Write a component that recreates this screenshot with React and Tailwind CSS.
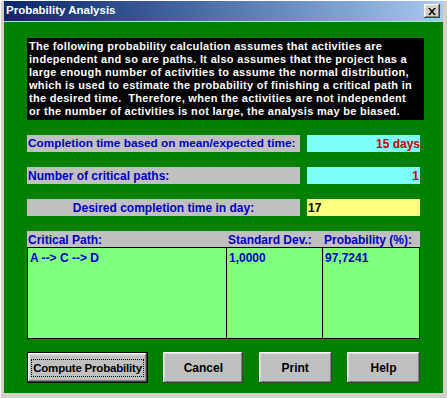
const bevel =
  "shadow-[inset_-1px_-1px_#404040,inset_1px_1px_#ffffff,inset_-2px_-2px_#808080,inset_2px_2px_#dfdfdf]";

const Button = ({ label, width, isDefault }) => (
  <button
    type="button"
    className={`h-[31px] ${width} bg-[#c0c0c0] text-black text-[12px] font-bold whitespace-nowrap ${
      isDefault ? "border border-black" : ""
    } ${bevel} flex items-center justify-center`}
  >
    {isDefault ? (
      <span className="border border-dotted border-black px-[1px] leading-[16px] text-[11.5px] tracking-[-0.2px]">{label}</span>
    ) : (
      label
    )}
  </button>
);

const lines = [
  "The following probability calculation assumes that activities are",
  "independent and so are paths. It also assumes that the project has a",
  "large enough number of activities to assume the normal distribution,",
  "which is used to estimate the probability of finishing a critical path in",
  "the desired time.  Therefore, when the activities are not independent",
  "or the number of activities is not large, the analysis may be biased.",
];

export default function App() {
  return (
    <div
      className="w-[447px] h-[398px] bg-[#d4d0c8] border-l border-t border-white flex flex-col pl-[3px] pr-[4px] pb-[5px] overflow-hidden"
      style={{ fontFamily: '"Liberation Sans", Arial, sans-serif' }}
    >
      {/* title bar */}
      <div className="h-[20px] bg-gradient-to-r from-[#0a246a] to-[#a6caf0] flex items-center justify-between pl-[2px] pr-[3px]">
        <span className="text-white text-[11.5px] font-bold">Probability Analysis</span>
        <div className={`w-[16px] h-[14px] bg-[#d4d0c8] ${bevel} flex items-center justify-center`}>
          <svg width="8" height="7" viewBox="0 0 8 7">
            <path d="M0 0h2l2 2.5L6 0h2L5 3.5 8 7H6L4 4.5 2 7H0l3-3.5z" fill="black" />
          </svg>
        </div>
      </div>

      {/* body */}
      <div className="flex-1 mt-[1px] bg-[#008000] pl-[23px] pr-[19px] pt-[16px] flex flex-col">
        <div className="h-[82px] bg-black px-[2px] pt-[2px] text-white text-[11px] font-bold leading-[13px] whitespace-pre tracking-[0.3px]">
          {lines.map((l) => (
            <div key={l}>{l}</div>
          ))}
        </div>

        <div className="w-[393px] mt-[15px] flex flex-col gap-[15px] text-[12px] font-bold whitespace-nowrap">
          <div className="h-[17px] flex justify-between">
            <div className="w-[273px] bg-[#c0c0c0] text-[#0000c0] pl-[1px] flex items-center text-[11.8px]">
              Completion time based on mean/expected time:
            </div>
            <div className="w-[113px] bg-[#80ffff] text-[#c00000] flex items-center justify-end">
              15 days
            </div>
          </div>
          <div className="h-[17px] flex justify-between">
            <div className="w-[273px] bg-[#c0c0c0] text-[#0000c0] pl-[1px] flex items-center">
              Number of critical paths:
            </div>
            <div className="w-[113px] bg-[#80ffff] text-[#c00000] flex items-center justify-end pr-[1px]">
              1
            </div>
          </div>
          <div className="h-[17px] flex justify-between">
            <div className="w-[273px] bg-[#c0c0c0] text-[#0000c0] flex items-center justify-center">
              Desired completion time in day:
            </div>
            <div className="w-[113px] bg-[#ffff80] text-black flex items-center pl-[1px]">
              17
            </div>
          </div>
        </div>

        {/* table */}
        <div className="w-[393px] mt-[15px] text-[12px] font-bold text-[#0000c0]">
          <div className="h-[16px] bg-[#c0c0c0] grid grid-cols-[200px_96px_97px] items-center whitespace-nowrap">
            <div className="pl-[1px]">Critical Path:</div>
            <div className="pl-[1px]">Standard Dev.:</div>
            <div className="pl-[1px]">Probability (%):</div>
          </div>
          <div className="h-[92px] bg-[#80ff80] border border-black grid grid-cols-[199px_96px_96px]">
            <div className="border-r border-black pl-[2px] pt-[1px]">A --&gt; C --&gt; D</div>
            <div className="border-r border-black pl-[2px] pt-[1px]">1,0000</div>
            <div className="pl-[2px] pt-[1px]">97,7241</div>
          </div>
        </div>

        {/* buttons */}
        <div className="w-[393px] mt-[13px] flex justify-between">
          <Button label="Compute Probability" width="w-[121px]" isDefault />
          <Button label="Cancel" width="w-[80px]" />
          <Button label="Print" width="w-[73px]" />
          <Button label="Help" width="w-[73px]" />
        </div>
      </div>
    </div>
  );
}
